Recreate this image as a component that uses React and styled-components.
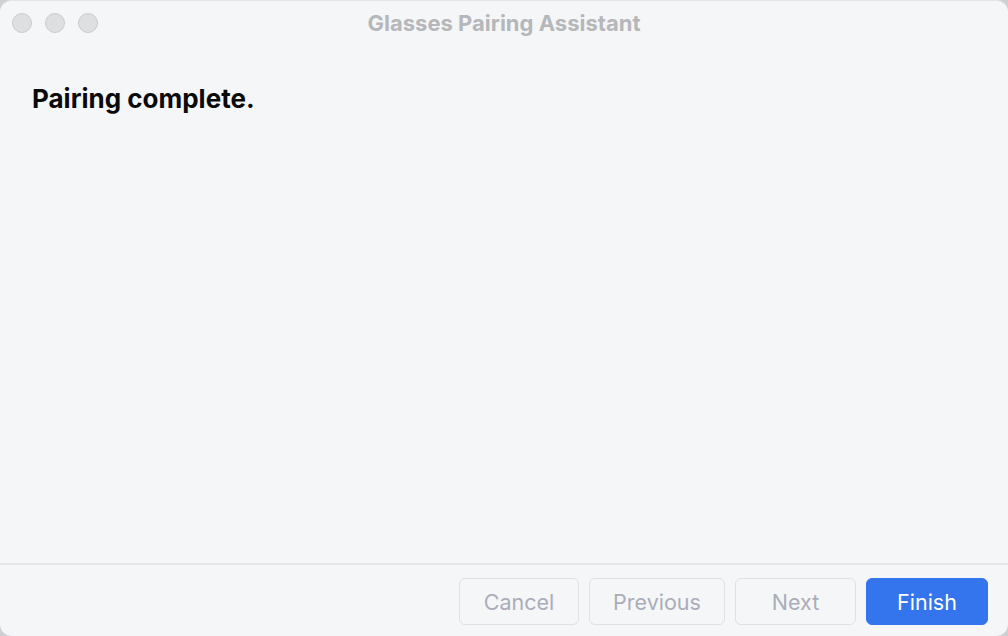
import styled, { createGlobalStyle } from "styled-components";

const GlobalStyle = createGlobalStyle`
  html, body {
    margin: 0;
    padding: 0;
    background: #cfd0d3;
  }
  body {
    font-family: Inter, "Noto Sans", "Liberation Sans", sans-serif;
  }
`;

const Window = styled.div`
  width: 1008px;
  height: 636px;
  box-sizing: border-box;
  display: flex;
  flex-direction: column;
  background-color: #f5f6f8;
  border-top: 1px solid #e4e5e8;
  border-radius: 12px;
  overflow: hidden;
`;

const TitleBar = styled.div`
  height: 44px;
  display: grid;
  grid-template-columns: 120px 1fr 120px;
  align-items: center;
  flex-shrink: 0;
`;

const Lights = styled.div`
  display: flex;
  gap: 13px;
  padding-left: 12px;
`;

const Light = styled.span`
  width: 20px;
  height: 20px;
  border-radius: 50%;
  background-color: #dedfe0;
  border: 1px solid #cacbcd;
  box-sizing: border-box;
`;

const Title = styled.div`
  text-align: center;
  font-size: 22px;
  font-weight: 700;
  color: #b6b7ba;
`;

const Body = styled.div`
  flex: 1;
  padding: 38px 32px 0;
`;

const Heading = styled.h1`
  margin: 0;
  font-size: 26px;
  font-weight: 700;
  color: #0a0a0a;
`;

const Footer = styled.div`
  height: 73px;
  box-sizing: border-box;
  flex-shrink: 0;
  border-top: 2px solid #e6e7ea;
  display: flex;
  justify-content: flex-end;
  align-items: flex-start;
  gap: 10px;
  padding: 13px 20px 0;
`;

const Button = styled.button`
  height: 47px;
  width: ${(props) => props.w}px;
  box-sizing: border-box;
  border-radius: 6px;
  font-family: inherit;
  font-size: 21.5px;
  border: 1px solid ${(props) => (props.primary ? "#3474ec" : "#e0e1e4")};
  background-color: ${(props) => (props.primary ? "#3474ec" : "#f5f6f8")};
  color: ${(props) => (props.primary ? "#ffffff" : "#aaadb8")};
  cursor: pointer;
`;

export default function App() {
  return (
    <>
      <GlobalStyle />
      <Window>
        <TitleBar>
          <Lights>
            <Light />
            <Light />
            <Light />
          </Lights>
          <Title>Glasses Pairing Assistant</Title>
          <div />
        </TitleBar>
        <Body>
          <Heading>Pairing complete.</Heading>
        </Body>
        <Footer>
          <Button w={120}>Cancel</Button>
          <Button w={136}>Previous</Button>
          <Button w={121}>Next</Button>
          <Button w={122} primary>
            Finish
          </Button>
        </Footer>
      </Window>
    </>
  );
}
